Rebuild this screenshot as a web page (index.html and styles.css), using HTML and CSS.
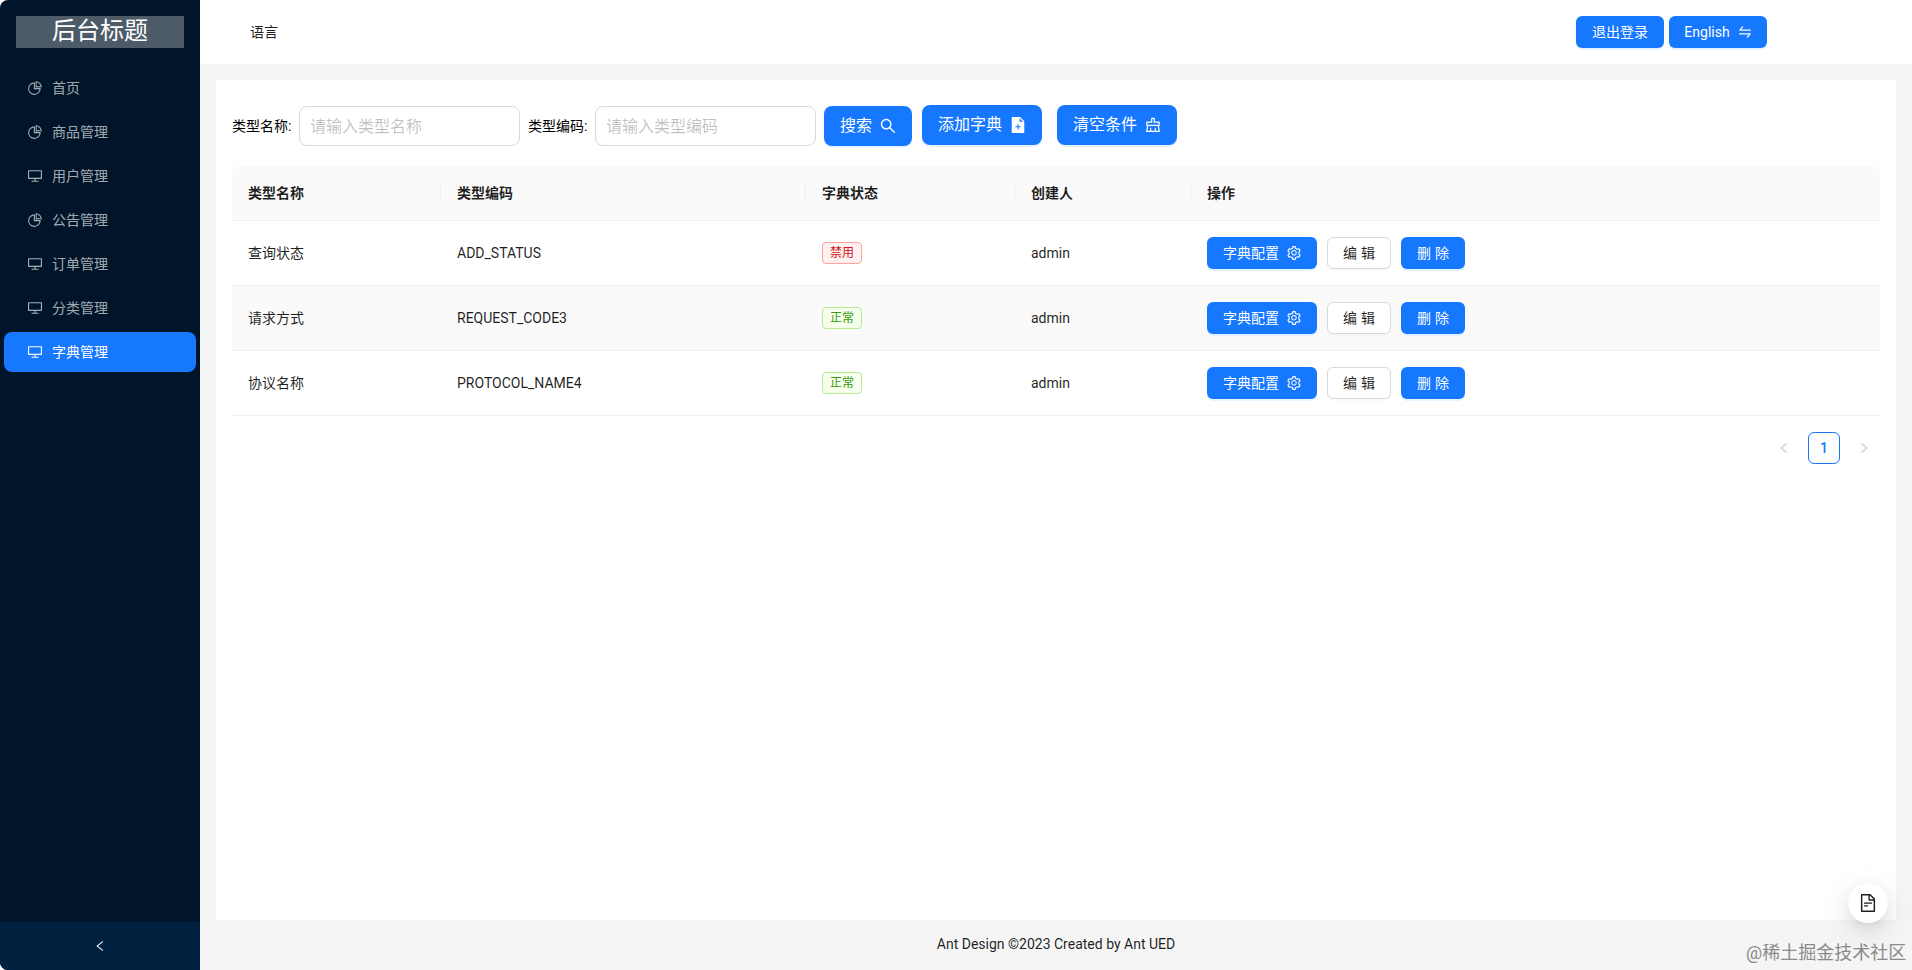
FILE: index.html
```html
<!DOCTYPE html>
<html lang="zh-CN">
<head>
    <meta charset="UTF-8">
    <meta name="viewport" content="width=device-width, initial-scale=1.0">
    <title>字典管理</title>
    <link rel="stylesheet" href="styles.css">
</head>
<body>

<svg class="icon-defs" xmlns="http://www.w3.org/2000/svg">
    <symbol id="i-pie" viewBox="64 64 896 896"><path d="M864 518H506V160c0-4.4-3.6-8-8-8h-26a398.46 398.46 0 0 0-282.8 117.1 398.19 398.19 0 0 0-85.7 127.1A397.61 397.61 0 0 0 72 552a398.46 398.46 0 0 0 117.1 282.8c36.7 36.7 79.5 65.6 127.1 85.7A397.61 397.61 0 0 0 472 952a398.46 398.46 0 0 0 282.8-117.1c36.7-36.7 65.6-79.5 85.7-127.1A397.61 397.61 0 0 0 872 552v-26c0-4.4-3.6-8-8-8zM705.7 787.8A331.59 331.59 0 0 1 470.4 884c-88.1-.4-170.9-34.9-233.2-97.2C174.5 724.1 140 640.7 140 552c0-88.7 34.5-172.1 97.2-234.8 54.6-54.6 124.9-87.9 200.8-95.5V586h364.3c-7.7 76.3-41.3 147-96.6 201.8zM952 462.4l-2.6-28.2c-8.5-92.1-49.4-179-115.2-244.6A399.4 399.4 0 0 0 589 74.6L560.7 72c-4.7-.4-8.7 3.2-8.7 7.9V464c0 4.4 3.6 8 8 8l384-1c4.7 0 8.4-4 8-8.6zm-332.2-58.2V147.6a332.24 332.24 0 0 1 166.4 89.8c45.7 45.6 77 103.6 90 166.1l-256.4.7z"/></symbol>
    <symbol id="i-desktop" viewBox="64 64 896 896"><path d="M928 140H96c-17.7 0-32 14.3-32 32v496c0 17.7 14.3 32 32 32h380v112H304c-8.8 0-16 7.2-16 16v48c0 4.4 3.6 8 8 8h432c4.4 0 8-3.6 8-8v-48c0-8.8-7.2-16-16-16H548V700h380c17.7 0 32-14.3 32-32V172c0-17.7-14.3-32-32-32zm-40 488H136V212h752v416z"/></symbol>
    <symbol id="i-search" viewBox="64 64 896 896"><path d="M909.6 854.5L649.9 594.8C690.2 542.7 712 479 712 412c0-80.2-31.3-155.4-87.9-212.1-56.6-56.7-132-87.9-212.1-87.9s-155.5 31.3-212.1 87.9C143.2 256.5 112 331.8 112 412c0 80.1 31.3 155.5 87.9 212.1C256.5 680.8 331.8 712 412 712c67 0 130.6-21.8 182.7-62l259.7 259.6a8.2 8.2 0 0 0 11.6 0l43.6-43.5a8.2 8.2 0 0 0 0-11.6zM570.4 570.4C528 612.7 471.8 636 412 636s-116-23.3-158.4-65.6C211.3 528 188 471.8 188 412s23.3-116.1 65.6-158.4C296 211.3 352.2 188 412 188s116.1 23.2 158.4 65.6S636 352.2 636 412s-23.3 116.1-65.6 158.4z"/></symbol>
    <symbol id="i-file-add" viewBox="64 64 896 896"><path d="M480 580H372a8 8 0 0 0-8 8v48a8 8 0 0 0 8 8h108v108a8 8 0 0 0 8 8h48a8 8 0 0 0 8-8V644h108a8 8 0 0 0 8-8v-48a8 8 0 0 0-8-8H544V472a8 8 0 0 0-8-8h-48a8 8 0 0 0-8 8v108zm374.6-291.3c6 6 9.4 14.1 9.4 22.6V928c0 17.7-14.3 32-32 32H192c-17.7 0-32-14.3-32-32V96c0-17.7 14.3-32 32-32h424.7c8.5 0 16.7 3.4 22.7 9.4l215.2 215.3zM790.2 326L602 137.8V326h188.2z"/></symbol>
    <symbol id="i-clear" viewBox="64 64 896 896"><path d="M899.1 869.6l-53-305.6H864c14.4 0 26-11.6 26-26V346c0-14.4-11.6-26-26-26H618V138c0-14.4-11.6-26-26-26H432c-14.4 0-26 11.6-26 26v182H160c-14.4 0-26 11.6-26 26v192c0 14.4 11.6 26 26 26h17.9l-53 305.6a25.95 25.95 0 0 0 25.6 30.4h723c1.5 0 3-.1 4.4-.4a25.88 25.88 0 0 0 21.2-30zM204 390h272V182h72v208h272v104H204V390zm468 440V674c0-4.4-3.6-8-8-8h-48c-4.4 0-8 3.6-8 8v156H416V674c0-4.4-3.6-8-8-8h-48c-4.4 0-8 3.6-8 8v156H202.8l45.1-260H776l45.1 260H672z"/></symbol>
    <symbol id="i-setting" viewBox="64 64 896 896"><path d="M924.8 625.7l-65.5-56c3.1-19 4.7-38.4 4.7-57.8s-1.6-38.8-4.7-57.8l65.5-56a32.03 32.03 0 0 0 9.3-35.2l-.9-2.6a443.74 443.74 0 0 0-79.7-137.9l-1.8-2.1a32.12 32.12 0 0 0-35.1-9.5l-81.3 28.9c-30-24.6-63.5-44-99.7-57.6l-15.7-85a32.05 32.05 0 0 0-25.8-25.7l-2.7-.5c-52.1-9.4-106.9-9.4-159 0l-2.7.5a32.05 32.05 0 0 0-25.8 25.7l-15.8 85.4a351.86 351.86 0 0 0-99 57.4l-81.9-29.1a32 32 0 0 0-35.1 9.5l-1.8 2.1a446.02 446.02 0 0 0-79.7 137.9l-.9 2.6c-4.5 12.5-.8 26.5 9.3 35.2l66.3 56.6c-3.1 18.8-4.6 38-4.6 57.1 0 19.2 1.5 38.4 4.6 57.1L99 625.5a32.03 32.03 0 0 0-9.3 35.2l.9 2.6c18.1 50.4 44.9 96.9 79.7 137.9l1.8 2.1a32.12 32.12 0 0 0 35.1 9.5l81.9-29.1c29.8 24.5 63.1 43.9 99 57.4l15.8 85.4a32.05 32.05 0 0 0 25.8 25.7l2.7.5a449.4 449.4 0 0 0 159 0l2.7-.5a32.05 32.05 0 0 0 25.8-25.7l15.7-85a350 350 0 0 0 99.7-57.6l81.3 28.9a32 32 0 0 0 35.1-9.5l1.8-2.1c34.8-41.1 61.6-87.5 79.7-137.9l.9-2.6c4.5-12.3.8-26.3-9.3-35zM788.3 465.9c2.5 15.1 3.8 30.6 3.8 46.1s-1.3 31-3.8 46.1l-6.6 40.1 74.7 63.9a370.03 370.03 0 0 1-42.6 73.6L721 702.8l-31.4 25.8c-23.9 19.6-50.5 35-79.3 45.8l-38.1 14.3-17.9 97a377.5 377.5 0 0 1-85 0l-17.9-97.2-37.8-14.5c-28.5-10.8-55-26.2-78.7-45.7l-31.4-25.9-93.4 33.2c-17-22.9-31.2-47.6-42.6-73.6l75.5-64.5-6.5-40c-2.4-14.9-3.7-30.3-3.7-45.5 0-15.3 1.2-30.6 3.7-45.5l6.5-40-75.5-64.5c11.3-26.1 25.6-50.7 42.6-73.6l93.4 33.2 31.4-25.9c23.7-19.5 50.2-34.9 78.7-45.7l37.9-14.3 17.9-97.2c28.1-3.2 56.8-3.2 85 0l17.9 97 38.1 14.3c28.7 10.8 55.4 26.2 79.3 45.8l31.4 25.8 92.8-32.9c17 22.9 31.2 47.6 42.6 73.6L781.8 426l6.5 39.9zM512 326c-97.2 0-176 78.8-176 176s78.8 176 176 176 176-78.8 176-176-78.8-176-176-176zm79.2 255.2A111.6 111.6 0 0 1 512 614c-29.9 0-58-11.7-79.2-32.8A111.6 111.6 0 0 1 400 502c0-29.9 11.7-58 32.8-79.2C454 401.6 482.1 390 512 390c29.9 0 58 11.6 79.2 32.8A111.6 111.6 0 0 1 624 502c0 29.9-11.7 58-32.8 79.2z"/></symbol>
    <symbol id="i-swap" viewBox="64 64 896 896"><path d="M847.9 592H152c-4.4 0-8 3.6-8 8v60c0 4.4 3.6 8 8 8h605.2L612.9 851c-4.1 5.2-.4 13 6.3 13h72.5c4.9 0 9.5-2.2 12.6-6.1l168.8-214.1c16.5-21 1.6-51.8-25.2-51.8zM872 356H266.8l144.3-183c4.1-5.2.4-13-6.3-13h-72.5c-4.9 0-9.5 2.2-12.6 6.1L150.9 380.2c-16.5 21-1.6 51.8 25.1 51.8h696c4.4 0 8-3.6 8-8v-60c0-4.4-3.6-8-8-8z"/></symbol>
    <symbol id="i-left" viewBox="64 64 896 896"><path d="M724 218.3V141c0-6.7-7.7-10.4-12.9-6.3L260.3 486.8a31.86 31.86 0 0 0 0 50.3l450.8 352.1c5.3 4.1 12.9.4 12.9-6.3v-77.3c0-4.9-2.3-9.6-6.1-12.6l-360-281 360-281.1c3.8-3 6.1-7.7 6.1-12.6z"/></symbol>
    <symbol id="i-right" viewBox="64 64 896 896"><path d="M765.7 486.8L314.9 134.7A7.97 7.97 0 0 0 302 141v77.3c0 4.9 2.3 9.6 6.1 12.6l360 281.1-360 281.1c-3.9 3-6.1 7.7-6.1 12.6V883c0 6.7 7.7 10.4 12.9 6.3l450.8-352.1a31.96 31.96 0 0 0 0-50.4z"/></symbol>
    <symbol id="i-file-text" viewBox="64 64 896 896"><path d="M854.6 288.6L639.4 73.4c-6-6-14.1-9.4-22.6-9.4H192c-17.7 0-32 14.3-32 32v832c0 17.7 14.3 32 32 32h640c17.7 0 32-14.3 32-32V311.3c0-8.5-3.4-16.7-9.4-22.7zM790.2 326H602V137.8L790.2 326zm1.8 562H232V136h302v216a42 42 0 0 0 42 42h216v494zM504 618H320c-4.4 0-8 3.6-8 8v48c0 4.4 3.6 8 8 8h184c4.4 0 8-3.6 8-8v-48c0-4.4-3.6-8-8-8zM312 490v48c0 4.4 3.6 8 8 8h384c4.4 0 8-3.6 8-8v-48c0-4.4-3.6-8-8-8H320c-4.4 0-8 3.6-8 8z"/></symbol>
</svg>

<div class="layout">
    <aside class="sider">
        <div class="logo">后台标题</div>
        <ul class="menu">
            <li class="menu-item"><svg class="icon"><use href="#i-pie"/></svg>首页</li>
            <li class="menu-item"><svg class="icon"><use href="#i-pie"/></svg>商品管理</li>
            <li class="menu-item"><svg class="icon"><use href="#i-desktop"/></svg>用户管理</li>
            <li class="menu-item"><svg class="icon"><use href="#i-pie"/></svg>公告管理</li>
            <li class="menu-item"><svg class="icon"><use href="#i-desktop"/></svg>订单管理</li>
            <li class="menu-item"><svg class="icon"><use href="#i-desktop"/></svg>分类管理</li>
            <li class="menu-item active"><svg class="icon"><use href="#i-desktop"/></svg>字典管理</li>
        </ul>
        <div class="sider-trigger"><svg class="icon icon-trigger"><use href="#i-left"/></svg></div>
    </aside>

    <div class="main">
        <header class="header">
            <span class="header-lang">语言</span>
            <button type="button" class="btn btn-primary btn-logout">退出登录</button>
            <button type="button" class="btn btn-primary btn-english">English<svg class="icon"><use href="#i-swap"/></svg></button>
        </header>

        <main class="content">
            <div class="filters">
                <label class="filter-label" for="type_name">类型名称:</label>
                <input class="filter-input" type="text" id="type_name" placeholder="请输入类型名称">
                <label class="filter-label" for="type_code">类型编码:</label>
                <input class="filter-input" type="text" id="type_code" placeholder="请输入类型编码">
                <button type="button" class="btn btn-primary btn-large btn-search">搜索<svg class="icon"><use href="#i-search"/></svg></button>
                <button type="button" class="btn btn-primary btn-large btn-add">添加字典<svg class="icon"><use href="#i-file-add"/></svg></button>
                <button type="button" class="btn btn-primary btn-large btn-clear">清空条件<svg class="icon"><use href="#i-clear"/></svg></button>
            </div>

            <table class="table">
                <colgroup>
                    <col class="col-name">
                    <col class="col-code">
                    <col class="col-status">
                    <col class="col-user">
                    <col>
                </colgroup>
                <thead>
                    <tr>
                        <th>类型名称</th>
                        <th>类型编码</th>
                        <th>字典状态</th>
                        <th>创建人</th>
                        <th>操作</th>
                    </tr>
                </thead>
                <tbody>
                    <tr>
                        <td>查询状态</td>
                        <td>ADD_STATUS</td>
                        <td><span class="tag tag-red">禁用</span></td>
                        <td>admin</td>
                        <td>
                            <div class="actions">
                                <button type="button" class="btn btn-primary">字典配置<svg class="icon"><use href="#i-setting"/></svg></button>
                                <button type="button" class="btn btn-default btn-spaced">编辑</button>
                                <button type="button" class="btn btn-primary btn-spaced">删除</button>
                            </div>
                        </td>
                    </tr>
                    <tr class="row-alt">
                        <td>请求方式</td>
                        <td>REQUEST_CODE3</td>
                        <td><span class="tag tag-green">正常</span></td>
                        <td>admin</td>
                        <td>
                            <div class="actions">
                                <button type="button" class="btn btn-primary">字典配置<svg class="icon"><use href="#i-setting"/></svg></button>
                                <button type="button" class="btn btn-default btn-spaced">编辑</button>
                                <button type="button" class="btn btn-primary btn-spaced">删除</button>
                            </div>
                        </td>
                    </tr>
                    <tr>
                        <td>协议名称</td>
                        <td>PROTOCOL_NAME4</td>
                        <td><span class="tag tag-green">正常</span></td>
                        <td>admin</td>
                        <td>
                            <div class="actions">
                                <button type="button" class="btn btn-primary">字典配置<svg class="icon"><use href="#i-setting"/></svg></button>
                                <button type="button" class="btn btn-default btn-spaced">编辑</button>
                                <button type="button" class="btn btn-primary btn-spaced">删除</button>
                            </div>
                        </td>
                    </tr>
                </tbody>
            </table>

            <div class="pagination">
                <span class="page-arrow"><svg class="icon"><use href="#i-left"/></svg></span>
                <span class="page-item">1</span>
                <span class="page-arrow"><svg class="icon"><use href="#i-right"/></svg></span>
            </div>
        </main>

        <footer class="footer">Ant Design ©2023 Created by Ant UED</footer>
    </div>
</div>

<button type="button" class="float-btn"><svg class="icon"><use href="#i-file-text"/></svg></button>
<div class="watermark">@稀土掘金技术社区</div>

</body>
</html>
```

FILE: styles.css
```css
* {
    box-sizing: border-box;
}
html, body {
    height: 100%;
}
body {
    margin: 0;
    font-family: "Roboto", "Noto Sans CJK SC", sans-serif;
    font-size: 14px;
    color: rgba(0, 0, 0, 0.88);
    background-color: #fff;
    overflow: hidden;
}
.icon-defs {
    display: none;
}
.icon {
    width: 14px;
    height: 14px;
    fill: currentColor;
    flex-shrink: 0;
}
.layout {
    display: flex;
    height: 970px;
}

/* sider */
.sider {
    width: 200px;
    display: flex;
    flex-direction: column;
    background-color: #001529;
    border-radius: 8px 0 0 8px;
    overflow: hidden;
}
.logo {
    height: 32px;
    margin: 16px 16px 16px;
    background-color: rgba(255, 255, 255, 0.3);
    color: #fff;
    font-size: 24px;
    line-height: 30px;
    text-align: center;
}
.menu {
    list-style: none;
    margin: 0;
    padding: 4px;
    flex: 1;
}
.menu-item {
    display: flex;
    align-items: center;
    gap: 10px;
    height: 40px;
    margin-bottom: 4px;
    padding: 0 0 2px 24px;
    border-radius: 8px;
    color: rgba(255, 255, 255, 0.65);
}
.menu-item .icon {
    margin-top: 2px;
}
.menu-item.active {
    background-color: #1677ff;
    color: #fff;
}
.sider-trigger {
    height: 48px;
    display: flex;
    align-items: center;
    justify-content: center;
    background-color: #002140;
    color: #fff;
}
.icon-trigger {
    width: 12px;
    height: 12px;
}

/* header */
.main {
    flex: 1;
    display: flex;
    flex-direction: column;
    min-width: 0;
    background-color: #f5f5f5;
}
.header {
    height: 64px;
    display: flex;
    align-items: center;
    padding: 0 145px 0 50px;
    background-color: #fff;
}
.header-lang {
    margin: 0 auto 2px 0;
}
.btn-english {
    margin-left: 5px;
    width: 98px;
}

/* buttons */
.btn {
    display: inline-flex;
    align-items: center;
    justify-content: center;
    gap: 8px;
    height: 32px;
    padding: 0 15px;
    border: 1px solid transparent;
    border-radius: 6px;
    font-family: inherit;
    font-size: 14px;
    line-height: 1;
    cursor: pointer;
}
.btn-primary {
    background-color: #1677ff;
    color: #fff;
    box-shadow: 0 2px 0 rgba(5, 145, 255, 0.1);
}
.btn-default {
    background-color: #fff;
    border-color: #d9d9d9;
    color: rgba(0, 0, 0, 0.88);
    box-shadow: 0 2px 0 rgba(0, 0, 0, 0.02);
}
.btn-spaced {
    letter-spacing: 4px;
    width: 64px;
    padding: 0 0 0 4px;
}
.btn-large {
    height: 40px;
    padding: 0 15px;
    border-radius: 8px;
    font-size: 16px;
}
.btn-large .icon {
    width: 16px;
    height: 16px;
}
.btn-search {
    width: 88px;
    margin-top: 1px;
    margin-left: 8px;
}
.btn-add {
    width: 120px;
    margin-left: 10px;
}
.btn-clear {
    width: 120px;
    margin-left: 15px;
}

/* content */
.content {
    height: 840px;
    margin: 16px 16px 0;
    padding: 25px 16px 0;
    background-color: #fff;
}
.filters {
    display: flex;
    align-items: flex-start;
    height: 41px;
    margin-bottom: 20px;
}
.filter-label {
    width: 67px;
    margin-top: 1px;
    line-height: 40px;
    color: #000;
    white-space: nowrap;
}
.filter-input {
    width: 221px;
    height: 40px;
    margin: 1px 8px 0 0;
    padding: 0 10px;
    border: 1px solid #d9d9d9;
    border-radius: 8px;
    font-family: inherit;
    font-size: 16px;
    outline: none;
}
.filter-input:last-of-type {
    margin-right: 0;
}
.filter-input::placeholder {
    color: rgba(0, 0, 0, 0.25);
}

/* table */
.table {
    width: 100%;
    table-layout: fixed;
    border-collapse: separate;
    border-spacing: 0;
    line-height: 22px;
}
.col-name {
    width: 209px;
}
.col-code {
    width: 365px;
}
.col-status {
    width: 209px;
}
.col-user {
    width: 176px;
}
.table th {
    position: relative;
    height: 55px;
    padding: 0 16px;
    background-color: #fafafa;
    border-bottom: 1px solid #f0f0f0;
    font-weight: 600;
    text-align: left;
}
.table th:first-child {
    border-top-left-radius: 8px;
}
.table th:last-child {
    border-top-right-radius: 8px;
}
.table th:not(:last-child)::after {
    content: "";
    position: absolute;
    top: 17px;
    right: 0;
    width: 1px;
    height: 20px;
    background-color: #f0f0f0;
}
.table td {
    height: 65px;
    padding: 0 16px;
    border-bottom: 1px solid #f0f0f0;
}
.row-alt td {
    background-color: #fafafa;
}
.actions {
    display: flex;
    gap: 10px;
}
.tag {
    display: block;
    width: 40px;
    height: 22px;
    padding: 0 7px;
    border: 1px solid;
    border-radius: 4px;
    font-size: 12px;
    line-height: 20px;
}
.tag-red {
    color: #cf1322;
    background-color: #fff1f0;
    border-color: #ffa39e;
}
.tag-green {
    color: #389e0d;
    background-color: #f6ffed;
    border-color: #b7eb8f;
}

/* pagination */
.pagination {
    display: flex;
    justify-content: flex-end;
    gap: 8px;
    margin-top: 16px;
}
.page-arrow, .page-item {
    width: 32px;
    height: 32px;
    display: flex;
    align-items: center;
    justify-content: center;
}
.page-arrow {
    color: rgba(0, 0, 0, 0.25);
}
.page-arrow .icon {
    width: 12px;
    height: 12px;
}
.page-item {
    border: 1px solid #1677ff;
    border-radius: 6px;
    color: #1677ff;
    font-weight: 500;
}

/* footer */
.footer {
    flex: 1;
    padding-top: 14px;
    text-align: center;
    line-height: 20px;
}

/* things that sit over the page */
.float-btn {
    position: absolute;
    left: 1848px;
    top: 883px;
    width: 40px;
    height: 40px;
    display: flex;
    align-items: center;
    justify-content: center;
    padding: 0;
    border: none;
    border-radius: 50%;
    background-color: #fff;
    color: rgba(0, 0, 0, 0.88);
    box-shadow: 0 6px 16px 0 rgba(0, 0, 0, 0.08), 0 3px 6px -4px rgba(0, 0, 0, 0.12), 0 9px 28px 8px rgba(0, 0, 0, 0.05);
}
.float-btn .icon {
    width: 18px;
    height: 18px;
}
.watermark {
    position: absolute;
    left: 1746px;
    top: 941px;
    font-size: 18px;
    line-height: 24px;
    color: #8a8a8a;
    white-space: nowrap;
}
```
